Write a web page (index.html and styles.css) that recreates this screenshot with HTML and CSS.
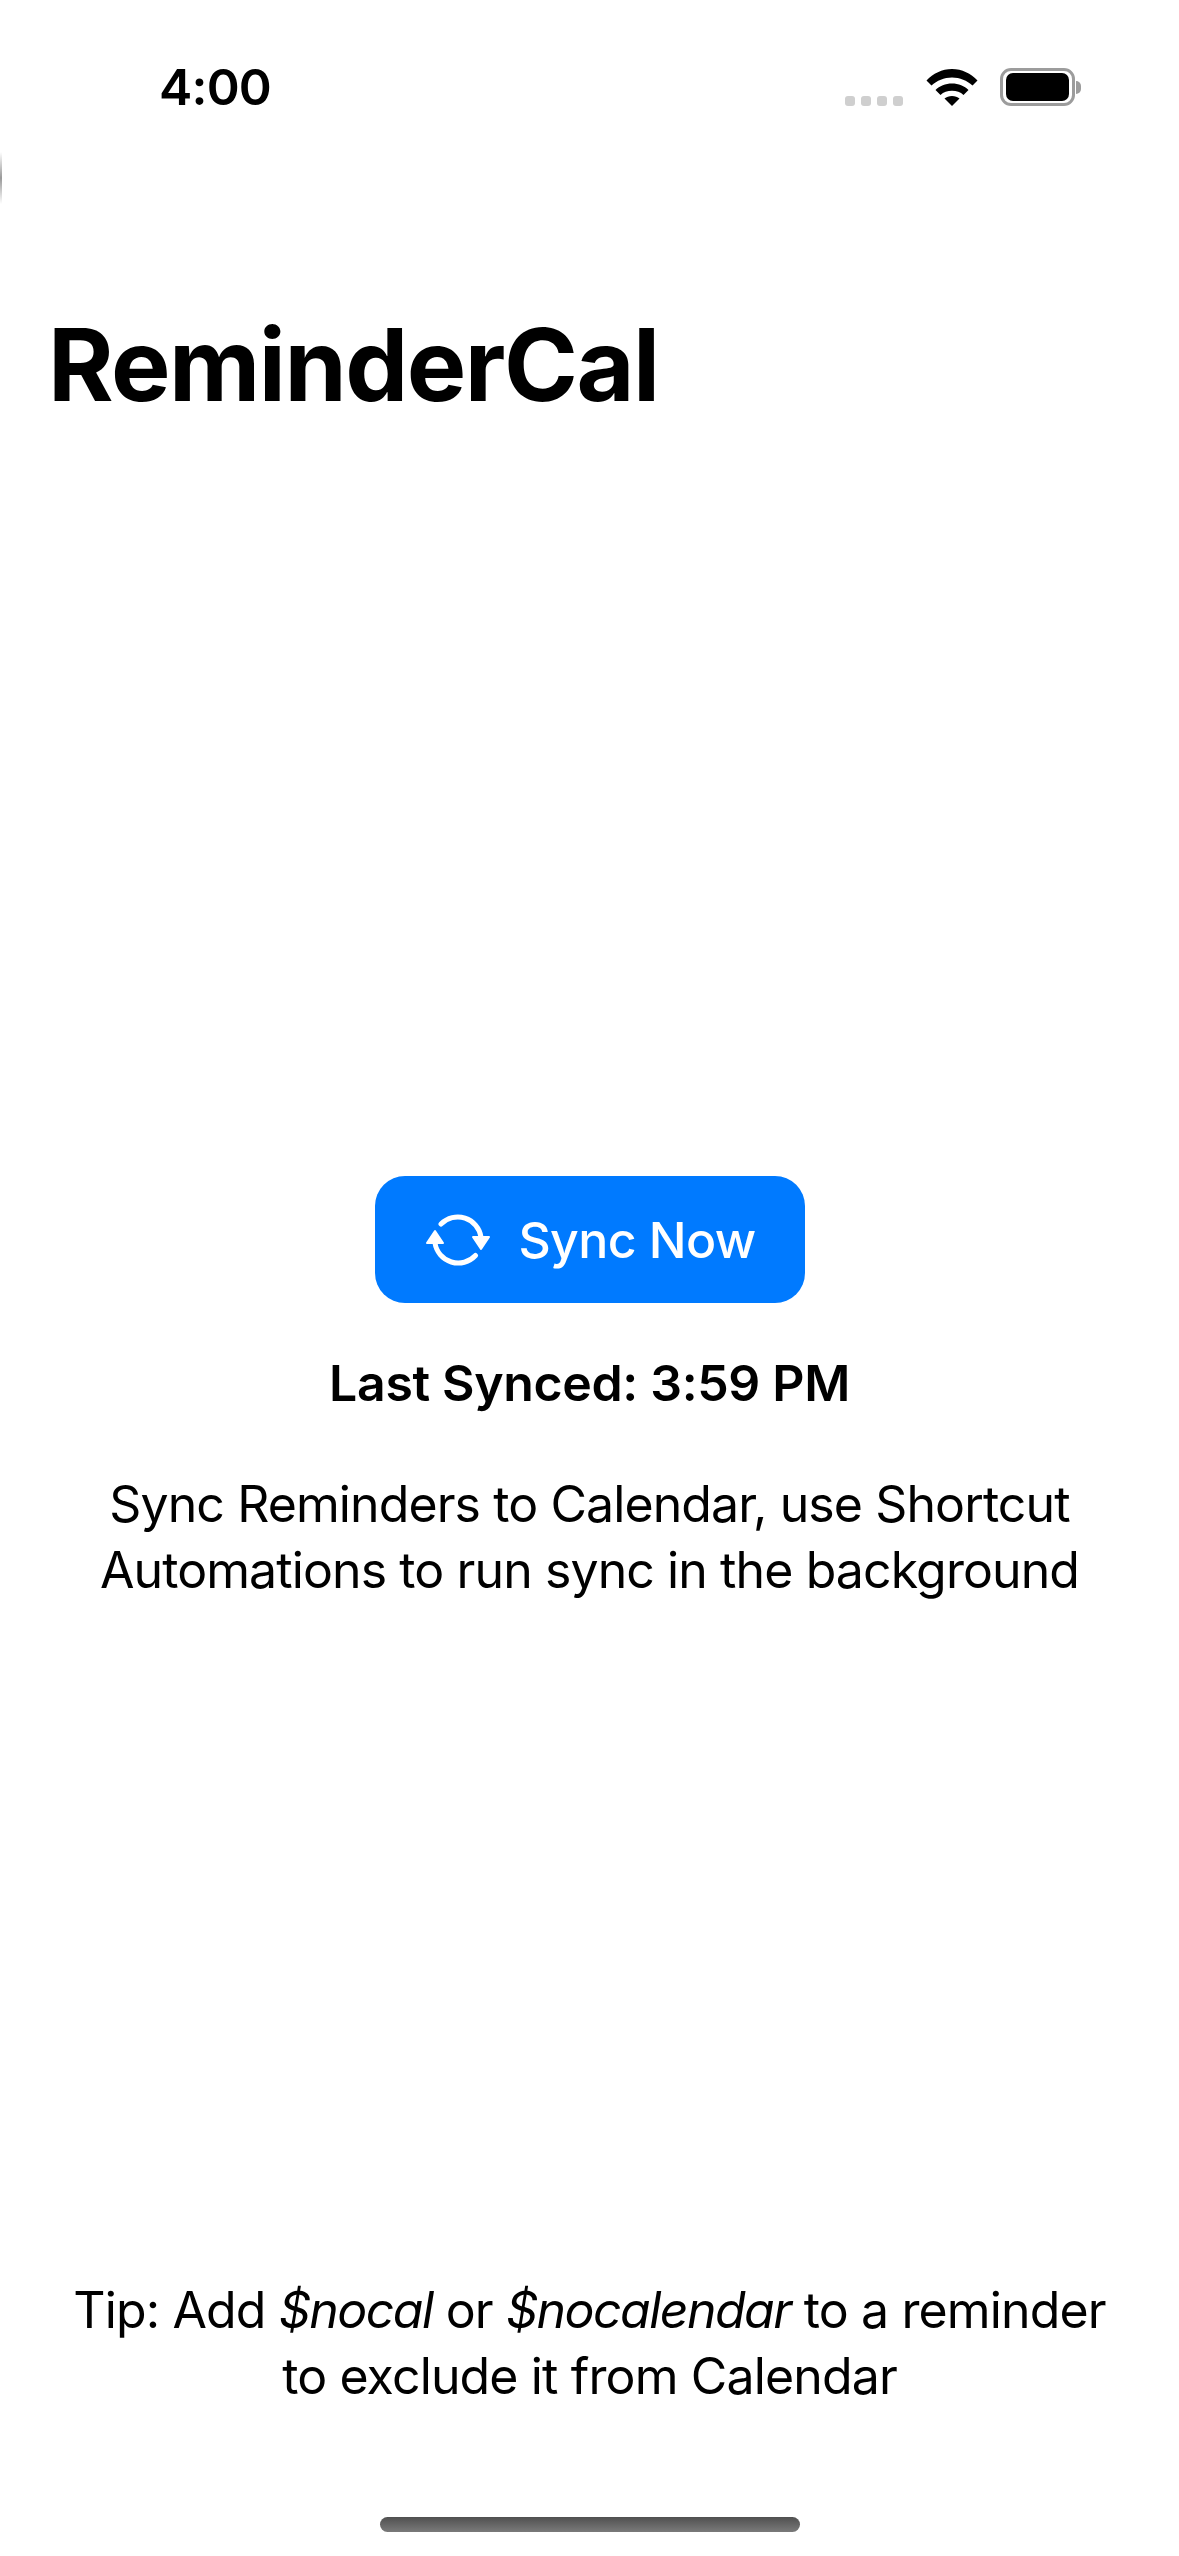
FILE: index.html
```html
<!DOCTYPE html>
<html lang="en">
<head>
    <meta charset="UTF-8">
    <title>ReminderCal</title>
    <link rel="stylesheet" href="styles.css">
</head>
<body>
    <div class="edge-mark"></div>

    <div class="status-bar">
        <span class="time">4:00</span>
        <div class="status-icons">
            <div class="signal-dots">
                <span class="dot"></span>
                <span class="dot"></span>
                <span class="dot"></span>
                <span class="dot"></span>
            </div>
            <svg class="wifi" viewBox="0 0 52 38" width="52" height="38">
                <path d="M0.5 12.5 C7 5.5 16 1 26 1 C36 1 45 5.5 51.5 12.5 L46.5 17.500 C41 12.5 34 9.5 26 9.5 C18 9.5 11 12.5 5.5 17.500 Z" fill="#000"/>
                <path d="M9.5 22 C13.5 18 19.5 15.5 26 15.5 C32.5 15.5 38.5 18 42.5 22 L37.500 27 C34.500 24.200 30.500 22.800 26 22.800 C21.500 22.800 17.500 24.200 14.500 27 Z" fill="#000"/>
                <path d="M18.500 30.500 C20.500 29 23 28 26 28 C29 28 31.500 29 33.500 30.500 L26 38 Z" fill="#000"/>
            </svg>
            <div class="battery">
                <div class="battery-body"><div class="battery-fill"></div></div>
                <div class="battery-cap"></div>
            </div>
        </div>
    </div>

    <h1 class="app-title">ReminderCal</h1>

    <div class="main">
        <button class="sync-btn">
            <svg class="sync-icon" viewBox="0 0 64 52" width="64" height="52">
                <path d="M15 10 A23.500 23.500 0 0 1 55 23" fill="none" stroke="#fff" stroke-width="5" stroke-linecap="round"/>
                <path d="M49.500 41.500 A23.500 23.500 0 0 1 9 29" fill="none" stroke="#fff" stroke-width="5" stroke-linecap="round"/>
                <path d="M1 29 L17 29 L9 17 Z" fill="#fff" stroke="#fff" stroke-width="2" stroke-linejoin="round"/>
                <path d="M47 23 L63 23 L55 35 Z" fill="#fff" stroke="#fff" stroke-width="2" stroke-linejoin="round"/>
            </svg>
            <span>Sync Now</span>
        </button>
        <p class="last-synced">Last Synced: 3:59 PM</p>
        <p class="description">Sync Reminders to Calendar, use Shortcut<br>Automations to run sync in the background</p>
    </div>

    <p class="tip">Tip: Add <em>$nocal</em> or <em>$nocalendar</em> to a reminder<br>to exclude it from Calendar</p>

    <div class="home-indicator"></div>
</body>
</html>
```

FILE: styles.css
```css
html, body {
    margin: 0;
    padding: 0;
}
body {
    position: relative;
    display: flex;
    flex-direction: column;
    width: 1179px;
    height: 2556px;
    overflow: hidden;
    background-color: #fff;
    color: #000;
    font-family: Inter, "Liberation Sans", sans-serif;
}
.edge-mark {
    position: absolute;
    left: 0;
    top: 152px;
    width: 2px;
    height: 52px;
    background: linear-gradient(to bottom, #fff, #999 50%, #fff);
}
.status-bar {
    display: flex;
    justify-content: space-between;
    align-items: flex-start;
    height: 148px;
    padding: 0 98px 0 159px;
    box-sizing: border-box;
}
.time {
    margin-top: 57px;
    font-size: 50px;
    line-height: 60px;
    font-weight: 600;
    letter-spacing: -0.8px;
}
.status-icons {
    display: flex;
    align-items: flex-start;
    padding-top: 68px;
}
.signal-dots {
    display: flex;
    gap: 6px;
    margin-top: 28px;
    margin-right: 23px;
}
.dot {
    width: 10px;
    height: 10px;
    border-radius: 3px;
    background-color: #cfcfcf;
}
.wifi {
    margin-right: 22px;
}
.battery {
    display: flex;
    align-items: center;
}
.battery-body {
    width: 75px;
    height: 38px;
    box-sizing: border-box;
    padding: 2px 3px;
    border: 3px solid #9c9c9c;
    border-radius: 11px;
}
.battery-fill {
    height: 100%;
    background-color: #000;
    border-radius: 7px;
}
.battery-cap {
    width: 5px;
    height: 13px;
    margin-left: 1px;
    background-color: #9c9c9c;
    border-radius: 0 7px 7px 0;
}
.app-title {
    margin: 155px 0 0;
    padding-left: 48px;
    font-size: 100px;
    line-height: 124px;
    font-weight: 700;
    letter-spacing: -1.5px;
}
.main {
    display: flex;
    flex-direction: column;
    align-items: center;
    padding-top: 749px;
    flex: 1;
}
.sync-btn {
    display: flex;
    align-items: center;
    justify-content: center;
    gap: 28px;
    width: 430px;
    height: 127px;
    padding: 0 0 0 3px;
    border: none;
    border-radius: 30px;
    background-color: #007aff;
    color: #fff;
    font-family: inherit;
    font-size: 50px;
    font-weight: 500;
    letter-spacing: -0.6px;
}
.last-synced {
    margin: 50px 0 0;
    font-size: 50px;
    line-height: 60px;
    font-weight: 600;
    letter-spacing: -0.35px;
}
.description {
    margin: 58px 0 0;
    font-size: 50px;
    line-height: 66px;
    text-align: center;
    letter-spacing: -0.9px;
}
.tip {
    margin: 0 0 147px;
    font-size: 50px;
    line-height: 66px;
    text-align: center;
    letter-spacing: -0.86px;
}
.tip em {
    letter-spacing: -1.55px;
}
.home-indicator {
    position: absolute;
    left: 380px;
    top: 2517px;
    width: 420px;
    height: 15px;
    border-radius: 8px;
    background: linear-gradient(to bottom, #505050, #7a7a7a);
}
```
